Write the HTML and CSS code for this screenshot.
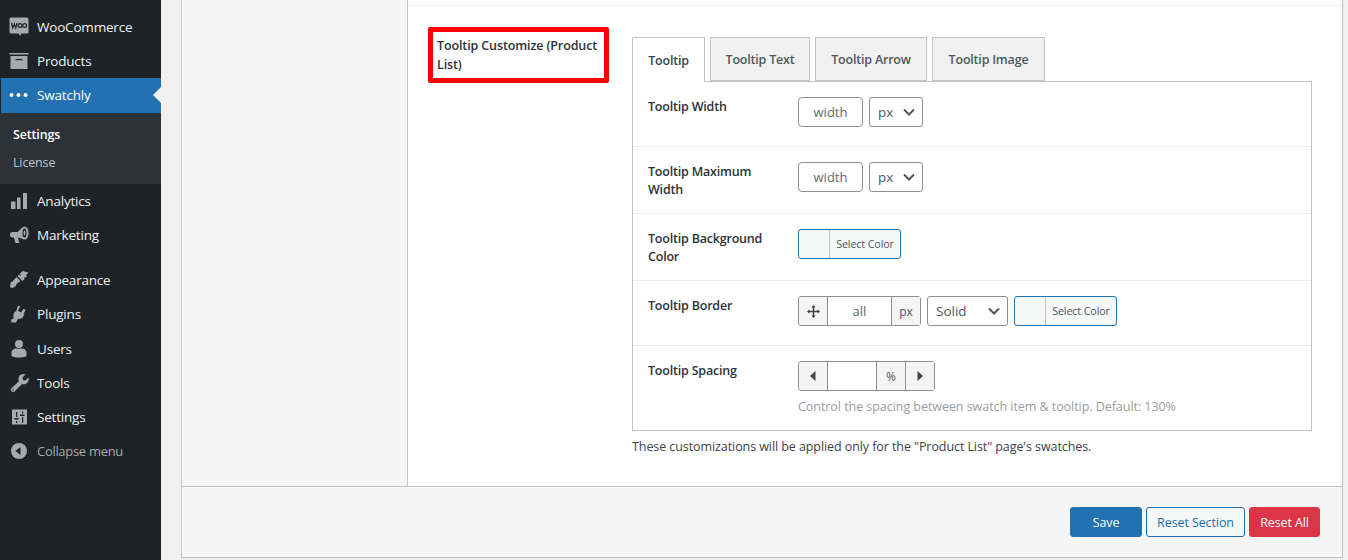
FILE: index.html
```html
<!DOCTYPE html>
<html lang="en">
<head>
<meta charset="utf-8">
<title>Swatchly Settings</title>
<link rel="stylesheet" href="styles.css">
</head>
<body>
<aside class="sidebar">
  <ul class="menu">
    <li class="item"><svg class="icon" viewBox="0 0 20 20"><path fill="#a7aaad" d="M2 0.500h16A1.500 1.500 0 0 1 19.500 2v13a1.500 1.500 0 0 1-1.500 1.500h-6l-.3 2.500-2.200-2.500H2A1.500 1.500 0 0 1 .5 15V2A1.500 1.500 0 0 1 2 .5z"/><path fill="none" stroke="#1d2327" stroke-width="1.200" d="M2.500 6l1.200 5 1.600-4 1.500 4 1.200-5"/><circle cx="11" cy="8.500" r="1.900" fill="none" stroke="#1d2327" stroke-width="1.200"/><circle cx="15.700" cy="8.500" r="1.900" fill="none" stroke="#1d2327" stroke-width="1.200"/></svg><span>WooCommerce</span></li>
    <li class="item"><svg class="icon" viewBox="0 0 20 20"><path fill="#a7aaad" d="M.5 2h19v1.500H.5zM1.500 5h17v13h-17z"/><path fill="#1d2327" d="M6.500 8h7v1.200h-7z"/></svg><span>Products</span></li>
    <li class="item active"><svg class="icon" viewBox="0 0 20 20"><circle cx="2.500" cy="10" r="2" fill="#fff"/><circle cx="9.500" cy="10" r="2" fill="#fff"/><circle cx="16.500" cy="10" r="2" fill="#fff"/></svg><span>Swatchly</span></li>
    <li class="submenu">
      <a class="sub current">Settings</a>
      <a class="sub">License</a>
    </li>
    <li class="item"><svg class="icon" viewBox="0 0 20 20"><path fill="#a7aaad" d="M2 10.500h4.500V18H2zM8 6.500h3.500V18H8zM14 2h4v16h-4z"/></svg><span>Analytics</span></li>
    <li class="item"><svg class="icon" viewBox="0 0 20 20"><path fill="#a7aaad" d="M1 9.500C1 8 2 7 3.500 7H8.500l5-4.500c1-1 2.500-1 3.500-.5 1.800.8 2.500 3.300 2.500 6s-.8 5.500-2.500 6.300c-1 .5-2.500.3-3.500-.6L9 12.500l1.300 5.500H6.500L5 12.500H3.500C2 12.500 1 11.500 1 10z"/><ellipse cx="15.500" cy="8" rx="2" ry="4.500" fill="#1d2327"/><ellipse cx="15.500" cy="8" rx=".9" ry="2.400" fill="#a7aaad"/></svg><span>Marketing</span></li>
    <li class="gap"></li>
    <li class="item"><svg class="icon" viewBox="0 0 20 20"><path fill="#a7aaad" d="M11 3.500L13.500 1l6 1.500-2.500 2.700 1 1.800-2.500.3-.2 2.200-2 1.500zM10 4.500l5 5-1.500 1.500-5-5zM7.500 7l4 4-4 3c-.5 2-2 3.500-3.500 3.800-1.300.3-2.500 0-3-1L1.500 13c.3-.8 1-1.300 1.800-1.300z"/></svg><span>Appearance</span></li>
    <li class="item"><svg class="icon" viewBox="0 0 20 20"><path fill="#a7aaad" d="M9 1.500l2.200 1.200-2.300 4 3.300 1.900 2.300-3.900 2.200 1.200-2.300 4 1 .6-1.100 2c-1 1.800-3.300 2.900-5.300 2.300L7 18.500H2.500L2 15.800l2.800-1.500c-.8-1.700-.6-3.800.2-5.300l1-1.800 1 .6z"/></svg><span>Plugins</span></li>
    <li class="item item-users"><svg class="icon" viewBox="0 0 20 20"><circle cx="10" cy="5" r="4" fill="#a7aaad"/><path fill="#a7aaad" d="M2.500 13.500c0-2.500 2.500-4 5-4h5c2.500 0 5 1.500 5 4V17c-2 1-4.500 1.500-7.500 1.500S4.500 18 2.500 17z"/></svg><span>Users</span></li>
    <li class="item"><svg class="icon" viewBox="0 0 20 20"><path fill="#a7aaad" d="M14.500 1a4.800 4.800 0 0 1 2 .4l-3 3 .6 2.500 2.400.6 3-3a5 5 0 0 1-6.400 6.400L5.500 18.500a2 2 0 0 1-3-.2 2 2 0 0 1-.2-2.800l7.600-7.300A5 5 0 0 1 14.500 1z"/><circle cx="4" cy="17" r=".8" fill="#1d2327"/></svg><span>Tools</span></li>
    <li class="item"><svg class="icon" viewBox="0 0 20 20"><path fill="#a7aaad" d="M3 2.500h15v15H3z"/><path fill="#1d2327" d="M7 5h1.200v5H7zM7 14h1.200v2H7zM5.500 11h4.200v1.500H5.500zM13 4.500h1.200v2H13zM13 10h1.200v6H13zM11 7.500h4.500V9H11z"/></svg><span>Settings</span></li>
    <li class="item collapse"><svg class="icon" viewBox="0 0 20 20"><circle cx="10" cy="10" r="8" fill="#a7aaad"/><path fill="#1d2327" d="M11.500 6v8l-5-4z"/></svg><span>Collapse menu</span></li>
  </ul>
</aside>
<main class="main">
  <div class="panel">
    <div class="panel-body">
      <nav class="side-nav"></nav>
      <section class="content">
        <div class="prev-row"></div>
        <div class="field">
          <div class="field-label"><div class="highlight">Tooltip Customize (Product List)</div></div>
          <div class="field-body">
            <div class="tabs">
              <div class="tab on tab-1">Tooltip</div>
              <div class="tab tab-2">Tooltip Text</div>
              <div class="tab tab-3">Tooltip Arrow</div>
              <div class="tab tab-4">Tooltip Image</div>
            </div>
            <div class="tab-panel">
              <div class="row row-a">
                <div class="row-label">Tooltip Width</div>
                <div class="row-ctl"><div class="input">width</div><div class="select sel-px">px<svg class="chev" viewBox="0 0 12 8"><path d="M1 1.500l5 5 5-5" fill="none" stroke="#50575e" stroke-width="2"/></svg></div></div>
              </div>
              <div class="row row-b">
                <div class="row-label">Tooltip Maximum Width</div>
                <div class="row-ctl"><div class="input">width</div><div class="select sel-px">px<svg class="chev" viewBox="0 0 12 8"><path d="M1 1.500l5 5 5-5" fill="none" stroke="#50575e" stroke-width="2"/></svg></div></div>
              </div>
              <div class="row row-b">
                <div class="row-label">Tooltip Background Color</div>
                <div class="row-ctl"><div class="color"><span class="swatch"></span><span class="color-text">Select Color</span></div></div>
              </div>
              <div class="row row-c">
                <div class="row-label">Tooltip Border</div>
                <div class="row-ctl">
                  <div class="group">
                    <span class="addon addon-move"><svg class="move" viewBox="0 0 14 14"><path fill="#3c434a" d="M7 0l2.300 2.600H7.800v3.600h3.600V4.700L14 7l-2.600 2.300V7.800H7.800v3.600h1.500L7 14l-2.300-2.600h1.500V7.800H2.600v1.500L0 7l2.600-2.300v1.500h3.600V2.600H4.700z"/></svg></span>
                    <span class="gval gval-all">all</span>
                    <span class="addon addon-px">px</span>
                  </div>
                  <div class="select sel-solid">Solid<svg class="chev" viewBox="0 0 12 8"><path d="M1 1.500l5 5 5-5" fill="none" stroke="#50575e" stroke-width="2"/></svg></div>
                  <div class="color"><span class="swatch"></span><span class="color-text">Select Color</span></div>
                </div>
              </div>
              <div class="row row-d">
                <div class="row-label">Tooltip Spacing</div>
                <div class="row-ctl-col">
                  <div class="group">
                    <span class="addon addon-move"><svg class="tri" viewBox="0 0 6 10"><path fill="#3c434a" d="M5.500 0v10L0 5z"/></svg></span>
                    <span class="gval gval-sp"></span>
                    <span class="addon addon-pct">%</span>
                    <span class="addon addon-right"><svg class="tri" viewBox="0 0 6 10"><path fill="#3c434a" d="M.5 0v10L6 5z"/></svg></span>
                  </div>
                  <p class="hint">Control the spacing between swatch item &amp; tooltip. Default: 130%</p>
                </div>
              </div>
            </div>
            <p class="note">These customizations will be applied only for the "Product List" page's swatches.</p>
          </div>
        </div>
      </section>
    </div>
    <footer class="footer">
      <button class="btn btn-save">Save</button>
      <button class="btn btn-section">Reset Section</button>
      <button class="btn btn-all">Reset All</button>
    </footer>
  </div>
</main>
</body>
</html>
```
FILE: styles.css
```css
* { box-sizing: border-box; }
html, body { margin: 0; padding: 0; height: 560px; overflow: hidden; }
body { display: flex; background: #f0f0f1; font-family: "Open Sans", "Noto Sans", sans-serif; font-size: 13px; color: #1d2327; }

.sidebar { width: 161px; height: 560px; background: #1d2327; flex: none; padding-top: 10px; }
.menu { list-style: none; margin: 0; padding: 0; }
.item { height: 34px; display: flex; align-items: center; color: #f0f0f1; font-size: 13.500px; letter-spacing: -.2px; padding-left: 9px; }
.item .icon { width: 20px; height: 20px; margin-right: 8px; flex: none; }
.item-users { margin-top: 1px; }
.active { height: 35px; padding-bottom: 2px; background: #2271b1; color: #fff; position: relative; margin-left: 1px; padding-left: 8px; }
.active::after { content: ""; position: absolute; right: 0; top: 9px; border: 8px solid transparent; border-right-color: #f0f0f1; border-left: 0; }
.submenu { height: 71px; background: #2c3338; padding-top: 8px; display: flex; flex-direction: column; }
.sub { height: 28px; line-height: 28px; padding-left: 13px; font-size: 12.500px; color: #c3c4c7; letter-spacing: -.15px; }
.current { color: #fff; font-weight: 600; }
.gap { height: 11px; }
.collapse { color: #a7aaad; }
.collapse span { font-size: 13px; letter-spacing: -.3px; }

.main { flex: 1; padding: 0 5px 0 20px; }
.panel { height: 558px; border: 1px solid #c3c4c7; border-top: 0; display: flex; flex-direction: column; background: #f5f5f5; }
.panel-body { flex: 1; display: flex; min-height: 0; }
.side-nav { width: 226px; background: #f5f5f5; border-right: 1px solid #c3c4c7; }
.content { flex: 1; background: #fff; }
.prev-row { height: 6px; border-bottom: 1px solid #f0f0f1; }
.field { display: flex; padding: 21px 30px 0 20px; }
.field-label { width: 204px; flex: none; }
.highlight { width: 181px; height: 56px; border: 5px solid #f00; border-radius: 2px; padding: 4px; font-weight: 600; font-size: 12.500px; line-height: 19px; letter-spacing: -.12px; color: #2c3338; }
.field-body { flex: 1; padding-top: 10px; }

.tabs { display: flex; gap: 5px; height: 45px; margin-bottom: -1px; position: relative; }
.tab { height: 44px; border: 1px solid #c3c4c7; background: #f1f1f1; display: flex; align-items: center; justify-content: center; font-weight: 600; font-size: 12.500px; letter-spacing: -.2px; color: #50575e; }
.tab.on { background: #fff; height: 45px; border-bottom: 0; color: #3c434a; }
.tab-1 { width: 73px; }
.tab-2 { width: 100px; }
.tab-3 { width: 112px; }
.tab-4 { width: 113px; }
.tab-panel { border: 1px solid #c3c4c7; }
.row { display: flex; padding-left: 15px; border-bottom: 1px solid #eeeeee; }
.row:last-child { border-bottom: 0; }
.row-a { height: 65px; padding-top: 15px; }
.row-b { height: 67px; padding-top: 15px; }
.row-c { height: 65px; padding-top: 15px; }
.row-d { height: 84px; padding-top: 15px; }
.row-label { width: 150px; flex: none; padding: 1px 15px 0 0; font-weight: 600; font-size: 12.500px; line-height: 17.800px; letter-spacing: -.2px; color: #2c3338; }
.row-ctl { display: flex; gap: 6px; }
.input { width: 65px; height: 30px; border: 1px solid #8c8f94; border-radius: 4px; display: flex; align-items: center; justify-content: center; color: #646970; font-size: 13px; }
.select { height: 30px; border: 1px solid #8c8f94; border-radius: 3px; background: #fff; display: flex; align-items: center; justify-content: space-between; font-size: 13.500px; color: #50575e; padding: 0 7px 0 8px; }
.sel-px { width: 54px; }
.sel-solid { width: 81px; }
.chev { width: 12px; height: 8px; }
.color { width: 103px; height: 30px; border: 1px solid #2271b1; border-radius: 3px; display: flex; background: #f6f7f7; }
.swatch { width: 31px; border-right: 1px solid #c3c4c7; }
.color-text { flex: 1; display: flex; align-items: center; justify-content: center; font-size: 10.700px; letter-spacing: -.1px; color: #50575e; }
.group { height: 30px; border: 1px solid #8c8f94; border-radius: 3px; display: flex; width: fit-content; }
.addon { background: #f5f5f5; display: flex; align-items: center; justify-content: center; color: #50575e; }
.addon-move { width: 28px; border-radius: 3px 0 0 3px; }
.addon-px { width: 29px; border-left: 1px solid #8c8f94; font-size: 12px; padding-top: 1px; }
.addon-pct { width: 29px; border-left: 1px solid #8c8f94; font-size: 12px; }
.addon-right { width: 29px; border-left: 1px solid #8c8f94; }
.move { width: 13px; height: 13px; }
.tri { width: 6px; height: 10px; }
.gval { border-left: 1px solid #8c8f94; display: flex; align-items: center; justify-content: center; color: #646970; background: #fff; }
.gval-all { width: 64px; }
.gval-sp { width: 49px; }
.hint { margin: 7px 0 0; font-size: 12.500px; letter-spacing: -.05px; color: #9a9ea3; }
.note { margin: 7px 0 0; font-size: 12.500px; letter-spacing: -.08px; color: #3c434a; }

.footer { height: 71px; flex: none; border-top: 1px solid #c3c4c7; background: #f5f5f5; display: flex; justify-content: flex-end; align-items: flex-start; gap: 4px; padding: 20px 22px 0 0; }
.btn { height: 30px; border-radius: 3px; font: inherit; font-size: 12.500px; letter-spacing: -.1px; display: flex; align-items: center; justify-content: center; padding: 0; }
.btn-save { width: 72px; background: #2271b1; border: 1px solid #2271b1; color: #fff; }
.btn-section { width: 99px; background: #f6f7f7; border: 1px solid #2271b1; color: #2271b1; }
.btn-all { width: 71px; background: #dc3545; border: 1px solid #dc3545; color: #fff; }
```
